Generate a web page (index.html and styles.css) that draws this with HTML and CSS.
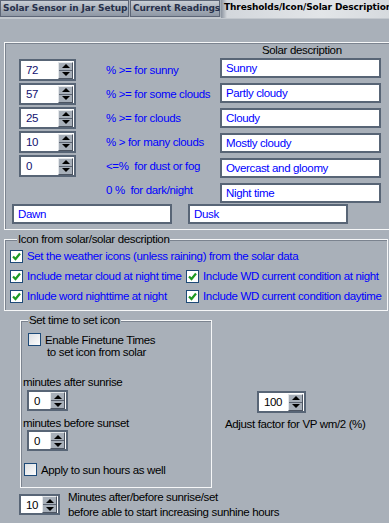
FILE: index.html
```html
<!DOCTYPE html>
<html lang="en">

<head>
    <meta charset="UTF-8">
    <title>Thresholds/Icon/Solar Description</title>
    <link rel="stylesheet" href="styles.css">
</head>

<body>

    <div class="tabs">
        <div class="tab">Solar Sensor in Jar Setup</div>
        <div class="tab">Current Readings</div>
        <div class="tab active">Thresholds/Icon/Solar Description</div>
    </div>

    <div class="page">

        <div class="group solar">
            <div class="solar-head">Solar description</div>
            <div class="solar-grid">
                <div class="thresholds">
                    <div class="row">
                        <div class="spin"><span class="val">72</span><span class="arrows"><i class="up"></i><i class="down"></i></span></div>
                        <span class="lbl">% &gt;= for sunny</span>
                    </div>
                    <div class="row">
                        <div class="spin"><span class="val">57</span><span class="arrows"><i class="up"></i><i class="down"></i></span></div>
                        <span class="lbl">% &gt;= for some clouds</span>
                    </div>
                    <div class="row">
                        <div class="spin"><span class="val">25</span><span class="arrows"><i class="up"></i><i class="down"></i></span></div>
                        <span class="lbl">% &gt;= for clouds</span>
                    </div>
                    <div class="row">
                        <div class="spin"><span class="val">10</span><span class="arrows"><i class="up"></i><i class="down"></i></span></div>
                        <span class="lbl">% &gt; for many clouds</span>
                    </div>
                    <div class="row">
                        <div class="spin"><span class="val">0</span><span class="arrows"><i class="up"></i><i class="down"></i></span></div>
                        <span class="lbl">&lt;=% &nbsp;for dust or fog</span>
                    </div>
                    <div class="row no-spin">
                        <span class="lbl">0 % &nbsp;for dark/night</span>
                    </div>
                </div>
                <div class="descs">
                    <div class="field">Sunny</div>
                    <div class="field">Partly cloudy</div>
                    <div class="field">Cloudy</div>
                    <div class="field">Mostly cloudy</div>
                    <div class="field">Overcast and gloomy</div>
                    <div class="field">Night time</div>
                </div>
            </div>
            <div class="dawn-dusk">
                <div class="field wide">Dawn</div>
                <div class="field wide">Dusk</div>
            </div>
        </div>

        <div class="group icons">
            <div class="group-title">Icon from solar/solar description</div>
            <div class="check-row">
                <label class="check"><span class="box on"><svg width="11" height="11" viewBox="0 0 11 11"><path d="M2 5.5 L4.5 8 L9 2.5" fill="none" stroke="#1f9a22" stroke-width="2.2"/></svg></span>Set the weather icons (unless raining) from the solar data</label>
            </div>
            <div class="check-row">
                <label class="check col1"><span class="box on"><svg width="11" height="11" viewBox="0 0 11 11"><path d="M2 5.5 L4.5 8 L9 2.5" fill="none" stroke="#1f9a22" stroke-width="2.2"/></svg></span>Include metar cloud at night time</label>
                <label class="check"><span class="box on"><svg width="11" height="11" viewBox="0 0 11 11"><path d="M2 5.5 L4.5 8 L9 2.5" fill="none" stroke="#1f9a22" stroke-width="2.2"/></svg></span>Include WD current condition at night</label>
            </div>
            <div class="check-row">
                <label class="check col1"><span class="box on"><svg width="11" height="11" viewBox="0 0 11 11"><path d="M2 5.5 L4.5 8 L9 2.5" fill="none" stroke="#1f9a22" stroke-width="2.2"/></svg></span>Inlude word nighttime at night</label>
                <label class="check"><span class="box on"><svg width="11" height="11" viewBox="0 0 11 11"><path d="M2 5.5 L4.5 8 L9 2.5" fill="none" stroke="#1f9a22" stroke-width="2.2"/></svg></span>Include WD current condition daytime</label>
            </div>
        </div>

        <div class="lower">
            <div class="group settime">
                <div class="group-title">Set time to set icon</div>
                <label class="check plain enable"><span class="box"></span>Enable Finetune Times</label>
                <div class="sub">to set icon from solar</div>
                <div class="caption first">minutes after sunrise</div>
                <div class="spin small"><span class="val">0</span><span class="arrows"><i class="up"></i><i class="down"></i></span></div>
                <div class="caption">minutes before sunset</div>
                <div class="spin small"><span class="val">0</span><span class="arrows"><i class="up"></i><i class="down"></i></span></div>
                <label class="check plain apply"><span class="box"></span>Apply to sun hours as well</label>
            </div>
            <div class="adjust">
                <div class="spin hundred"><span class="val">100</span><span class="arrows"><i class="up"></i><i class="down"></i></span></div>
                <div class="caption">Adjust factor for VP wm/2 (%)</div>
            </div>
        </div>

        <div class="bottom">
            <div class="spin small"><span class="val">10</span><span class="arrows"><i class="up"></i><i class="down"></i></span></div>
            <div class="bottom-text">Minutes after/before sunrise/set<br>before able to start increasing sunhine hours</div>
        </div>

    </div>

</body>

</html>
```

FILE: styles.css
```css
html,
body {
    overflow: hidden;
}

body {
    margin: 0;
    width: 389px;
    height: 523px;
    background: #a9b0b9;
    font-family: "Liberation Sans", Arial, sans-serif;
    font-size: 11.5px;
    letter-spacing: -0.35px;
    color: #000;
}

/* tab strip */

.tabs {
    display: flex;
    height: 17px;
    border-bottom: 2px solid #c3c8ce;
    font-family: "DejaVu Sans", Verdana, sans-serif;
    font-weight: bold;
    font-size: 9px;
    letter-spacing: -0.1px;
}

.tab {
    box-sizing: border-box;
    height: 17px;
    line-height: 15px;
    padding: 0 2px;
    margin-right: 1px;
    color: #27304a;
    border: 1px solid #5d6677;
    background: linear-gradient(#c9ced5, #a2aab5 60%, #8e97a4);
    white-space: nowrap;
}

.tab:first-child {
    width: 129px;
}

.tab:nth-child(2) {
    width: 90px;
}

.tab.active {
    flex: 1;
    margin-right: 0;
    height: 18px;
    border: none;
    padding-left: 3px;
    color: #000;
    background: linear-gradient(90deg, #8a929e, #d3d7dc 6px, #e2e5e8 60%, #d6dade);
    overflow: hidden;
}

.page {
    padding-left: 4px;
}

/* group boxes */

.group {
    box-sizing: border-box;
    border: 1px solid #f6f7f8;
    box-shadow: inset 1px 1px 0 #7b838f;
}

.group-title {
    width: fit-content;
    height: 13px;
    line-height: 13px;
    margin: -7px 0 0 7px;
    padding: 0 1px;
    background: #a9b0b9;
    white-space: nowrap;
}

/* solar description */

.solar {
    width: 400px;
    margin-top: 23px;
    padding-bottom: 5px;
}

.solar-head {
    height: 15px;
    line-height: 15px;
    padding-left: 257px;
}

.solar-grid {
    display: flex;
    padding-left: 14px;
}

.thresholds {
    width: 201px;
}

.row {
    display: flex;
    align-items: center;
    height: 24px;
}

.row.no-spin {
    padding-left: 87px;
}

.lbl {
    margin-left: 30px;
    color: #0000ff;
    white-space: nowrap;
}

.no-spin .lbl {
    margin-left: 0;
}

.descs {
    display: flex;
    flex-direction: column;
    gap: 5px;
    width: 161px;
}

.field {
    box-sizing: border-box;
    height: 20px;
    line-height: 16px;
    padding-left: 4px;
    border: 2px solid #586576;
    background: #fff;
    color: #0000ff;
    white-space: nowrap;
}

.dawn-dusk {
    display: flex;
    gap: 16px;
    margin-top: 1px;
    padding-left: 7px;
}

.field.wide {
    width: 160px;
}

/* spin edits */

.spin {
    box-sizing: border-box;
    display: flex;
    align-items: center;
    width: 57px;
    height: 22px;
    padding: 0 1px 0 5px;
    border: 2px solid #586576;
    background: #fff;
    color: #111170;
}

.spin .val {
    flex: 1;
}

.arrows {
    box-sizing: border-box;
    display: flex;
    flex-direction: column;
    width: 15px;
    height: 17px;
    border: 1px solid;
    border-color: #e4e7ea #4d5562 #4d5562 #e4e7ea;
    background: #a7afb9;
}

.arrows i {
    flex: 1;
    display: flex;
    align-items: center;
    justify-content: center;
}

.arrows .down {
    border-top: 1px solid #5c6472;
}

.arrows .up::after {
    content: '';
    border-left: 4px solid transparent;
    border-right: 4px solid transparent;
    border-bottom: 4px solid #000;
}

.arrows .down::after {
    content: '';
    border-left: 4px solid transparent;
    border-right: 4px solid transparent;
    border-top: 4px solid #000;
}

.spin.small {
    width: 41px;
    height: 21px;
    color: #000;
}

.spin.hundred {
    width: 49px;
    color: #000;
}

/* checkboxes */

.icons {
    width: 384px;
    margin-top: 9px;
    padding: 0 0 4px 5px;
}

.check-row {
    display: flex;
    height: 20px;
    align-items: center;
}

.check-row:first-of-type {
    margin-top: -2px;
}

.check {
    display: flex;
    align-items: center;
    gap: 4px;
    color: #0000ff;
    white-space: nowrap;
}

.check.col1 {
    width: 176px;
}

.box {
    box-sizing: border-box;
    display: flex;
    align-items: center;
    justify-content: center;
    width: 13px;
    height: 13px;
    border: 1px solid #1d4a78;
    background: linear-gradient(135deg, #dcdfe3, #fdfdfd);
}

.box.on {
    background: #fff;
}

.check.plain {
    color: #000;
}

/* lower part */

.lower {
    display: flex;
}

.settime {
    width: 192px;
    margin: 9px 0 0 16px;
    padding-bottom: 11px;
}

.enable {
    margin: 6px 0 0 7px;
    height: 13px;
}

.sub {
    line-height: 13px;
    padding-left: 26px;
}

.caption {
    line-height: 13px;
    margin: 6px 0 0 2px;
    white-space: nowrap;
}

.caption.first {
    margin-top: 17px;
}

.settime .spin {
    margin: 1px 0 0 6px;
}

.settime .caption + .spin {
    margin-top: 0;
}

.settime .caption.first + .spin {
    margin-top: 1px;
}

.apply {
    margin: 12px 0 0 3px;
    height: 13px;
}

.adjust {
    margin-left: 13px;
    padding-top: 80px;
}

.adjust .spin {
    margin-left: 32px;
}

.adjust .caption {
    margin: 5px 0 0 0;
}

.bottom {
    display: flex;
    align-items: flex-start;
    margin: 6px 0 0 15px;
}

.bottom-text {
    margin: -4px 0 0 8px;
    line-height: 15px;
    white-space: nowrap;
}
```
